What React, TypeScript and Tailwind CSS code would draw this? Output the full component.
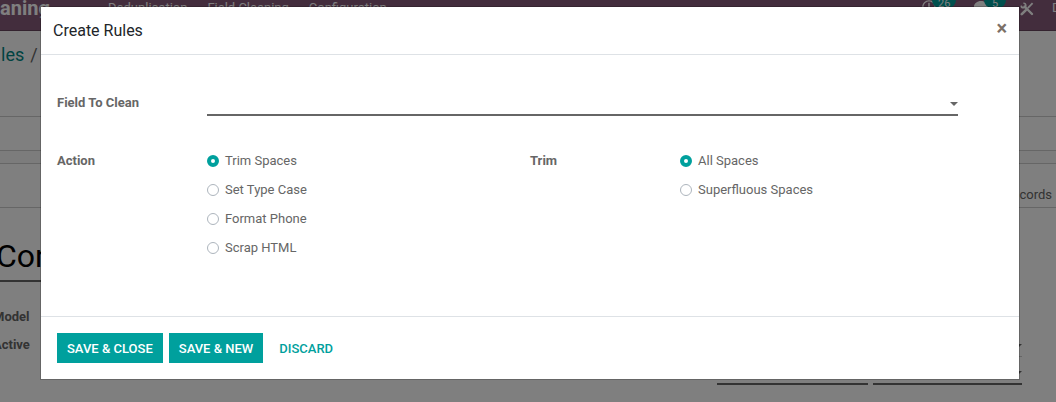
import { useState } from "react";
import { FaComment, FaRegClock } from "react-icons/fa";

const actions = ["Trim Spaces", "Set Type Case", "Format Phone", "Scrap HTML"];
const trims = ["All Spaces", "Superfluous Spaces"];

type RadioGroupProps = {
  label: string;
  name: string;
  options: string[];
};

const RadioGroup = ({ label, name, options }: RadioGroupProps) => {
  const [value, setValue] = useState(options[0]);

  return (
    <div role="radiogroup" aria-labelledby={`${name}-label`} className="flex items-start">
      <span id={`${name}-label`} className="w-[150px] shrink-0 font-bold">
        {label}
      </span>
      <div className="flex flex-col gap-[9px]">
        {options.map((option) => (
          <label key={option} className="flex items-center gap-1.5">
            <input
              type="radio"
              name={name}
              value={option}
              checked={value === option}
              onChange={() => setValue(option)}
              className="h-3 w-3 appearance-none rounded-full border border-[#adb5bd] bg-white checked:border-4 checked:border-[#00a09d]"
            />
            {option}
          </label>
        ))}
      </div>
    </div>
  );
};

const Caret = () => (
  <svg viewBox="0 0 8 4" className="h-1 w-2" fill="#666666">
    <path d="M0 0h8L4 4z" />
  </svg>
);

const ToolsIcon = () => (
  <svg viewBox="0 0 14 14" className="h-3.5 w-3.5" fill="none" stroke="currentColor">
    <path d="M4.5 4.5l7.5 7.5" strokeWidth="2.4" strokeLinecap="round" />
    <path d="M3.4 1.2A2.3 2.3 0 1 1 1.2 3.6" strokeWidth="1.6" />
    <path d="M12.6 1.2L7.8 6.2" strokeWidth="1.8" />
    <path d="M5.6 8.4L1.8 12.2" strokeWidth="2.6" strokeLinecap="round" />
  </svg>
);

const Background = () => {
  return (
    <div className="-ml-2 text-[13px] text-[#666666]">
      <nav className="flex h-[31px] items-start justify-between border-b border-[#68465f] bg-[#875a7b] pl-2 text-white">
        <div className="flex items-start">
          <span className="w-[108px] text-[20px] leading-4 font-bold">aning</span>
          <div className="flex gap-5 leading-4">
            <a href="#deduplication">Deduplication</a>
            <a href="#field-cleaning">Field Cleaning</a>
            <a href="#configuration">Configuration</a>
          </div>
        </div>
        <div className="flex items-start">
          <div className="flex w-[52px]">
            <FaRegClock className="h-3.5 w-3.5" />
            <span className="-ml-1 h-2 rounded-b-full bg-[#00a09d] px-1.5 text-[11px] leading-2">26</span>
          </div>
          <div className="flex w-[46px]">
            <FaComment className="h-3.5 w-3.5" />
            <span className="-ml-1 h-2 rounded-b-full bg-[#00a09d] px-2 text-[11px] leading-2">5</span>
          </div>
          <div className="pt-0.5">
            <ToolsIcon />
          </div>
          <span className="w-[22px] overflow-hidden pl-[18px] leading-4">D</span>
        </div>
      </nav>
      <div className="h-[86px] border-b border-[#cccccc] pt-3 pl-[9px] text-[18px] leading-6">
        <a href="#rules" className="text-[#008784]">les</a>
        <span className="pl-1.5">/</span>
      </div>
      <div className="h-[34px] border-b border-[#cccccc]" />
      <div className="h-[13px] border-b border-[#cccccc] bg-[#f9f9f9]" />
      <div className="flex h-11 items-end justify-end border-b border-[#cccccc] pr-1 pb-1 leading-4">
        cords
      </div>
      <div className="pr-[34px]">
        <h1 className="h-[74px] w-1/2 border-b-2 border-[#666666] pt-7 pl-1 text-[32px] leading-10 text-black">
          Con
        </h1>
        <div className="flex justify-between">
          <div className="flex flex-col gap-3 pt-[27px] pl-px leading-4 font-bold">
            <span>Model</span>
            <span>Active</span>
          </div>
          <div className="w-[305px]">
            <div className="flex h-[75px] items-end justify-end border-b border-[#cccccc] pb-2">
              <Caret />
            </div>
            <div className="flex gap-[5px]">
              <div className="h-7 flex-1 border-b-2 border-[#666666]" />
              <div className="flex h-7 w-[149px] items-end justify-end border-b-2 border-[#666666] pb-2">
                <Caret />
              </div>
            </div>
          </div>
        </div>
      </div>
    </div>
  );
};

const CreateRulesModal = () => {
  return (
    <div className="absolute inset-0 bg-black/50 pt-1.5 pr-9 pl-10">
      <div
        role="dialog"
        aria-labelledby="modal-title"
        className="border border-black/20 bg-white bg-clip-padding text-[13px] leading-5 text-[#666666]"
      >
        <header className="flex h-12 items-center justify-between border-b border-[#dee2e6] px-3">
          <h4 id="modal-title" className="text-[16px] leading-6 text-[#212529]">
            Create Rules
          </h4>
          <button type="button" aria-label="Close" className="pb-1.5 text-[20px] leading-5 font-bold text-[#7c7067]">
            ×
          </button>
        </header>

        <div className="px-4 pt-8 pb-[58px]">
          <div className="flex items-end pr-[45px]">
            <label htmlFor="field" className="w-[150px] shrink-0 pb-[3px] font-bold">
              Field To Clean
            </label>
            <div className="relative flex-1">
              <select
                id="field"
                className="block h-[29px] w-full appearance-none border-b-2 border-[#666666] bg-white outline-none"
              >
                <option value=""></option>
              </select>
              <div className="pointer-events-none absolute top-[15px] right-0">
                <Caret />
              </div>
            </div>
          </div>
          <div className="grid grid-cols-2 pt-[35px]">
            <RadioGroup label="Action" name="action" options={actions} />
            <RadioGroup label="Trim" name="trim" options={trims} />
          </div>
        </div>

        <footer className="flex gap-1.5 border-t border-[#dee2e6] p-4 font-medium">
          <button type="button" className="h-[30px] bg-[#00a09d] px-2.5 pt-0.5 text-white">
            SAVE &amp; CLOSE
          </button>
          <button type="button" className="h-[30px] bg-[#00a09d] px-2.5 pt-0.5 text-white">
            SAVE &amp; NEW
          </button>
          <button type="button" className="h-[30px] px-2.5 pt-0.5 text-[#00a09d]">
            DISCARD
          </button>
        </footer>
      </div>
    </div>
  );
};

const App = () => {
  return (
    <div className="relative min-h-screen overflow-hidden bg-white font-[Roboto,sans-serif]">
      <Background />
      <CreateRulesModal />
    </div>
  );
};

export default App;
